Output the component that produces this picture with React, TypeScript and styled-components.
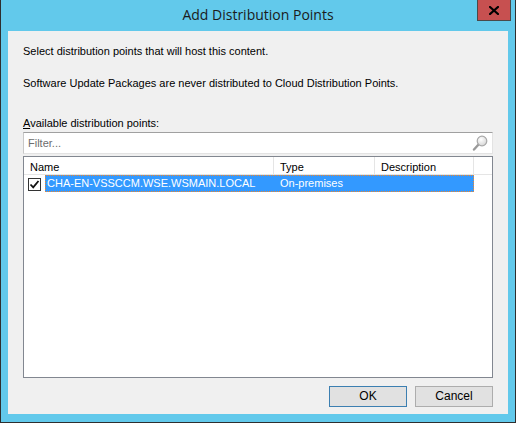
import React from 'react'
import styled, { createGlobalStyle } from 'styled-components'

const GlobalStyle = createGlobalStyle`
    html, body {
        margin: 0;
        padding: 0;
        background: #ffffff;
    }
    * {
        box-sizing: border-box;
    }
`

const FRAME = '#62c9eb'
const UI_FONT = '"Liberation Sans", Arial, sans-serif'

const Window = styled.div`
    width: 516px;
    height: 423px;
    background: ${FRAME};
    border: 1px solid #2e2e2e;
    border-top: none;
    display: flex;
    flex-direction: column;
    padding: 0 7px 8px 7px;
`

const TitleBar = styled.div`
    height: 31px;
    margin: 0 -7px;
    display: grid;
    grid-template-columns: 1fr auto 1fr;
    align-items: start;
`

const Title = styled.div`
    grid-column: 2;
    padding-top: 5px;
    font-family: "Open Sans", sans-serif;
    font-size: 14px;
    line-height: 20px;
    color: #1b1b1b;
`

const CloseButton = styled.div`
    grid-column: 3;
    justify-self: end;
    margin-right: 4px;
    width: 34px;
    height: 21px;
    background: #c75050;
    border: 1px solid #4a4a4a;
    border-top: none;
    display: flex;
    align-items: center;
    justify-content: center;
`

const Client = styled.div`
    flex: 1;
    background: #f0f0f0;
    padding: 14px 15px 7px 15px;
    display: flex;
    flex-direction: column;
    font-family: ${UI_FONT};
    font-size: 11px;
    line-height: 13px;
    color: #000;
`

const Text = styled.div<{ $gap?: number }>`
    margin-bottom: ${p => p.$gap ?? 0}px;
    white-space: nowrap;
`

const FilterBox = styled.div`
    height: 22px;
    width: 470px;
    background: #fff;
    border: 1px solid #e3e3e3;
    border-top-color: #a0a0a0;
    border-left-color: #c8c8c8;
    display: flex;
    align-items: center;
    padding: 0 4px 0 4px;
    margin-bottom: 1px;
`

const FilterText = styled.span`
    flex: 1;
    color: #6d6d6d;
`

const ListView = styled.div`
    width: 470px;
    height: 222px;
    margin-top: 1px;
    background: #fff;
    border: 1px solid #828790;
    display: flex;
    flex-direction: column;
`

const HeaderRow = styled.div`
    display: flex;
    height: 18px;
    border-bottom: 1px solid #e5e5e5;
`

const HeaderCell = styled.div<{ $w: number }>`
    width: ${p => p.$w}px;
    border-right: 1px solid #e5e5e5;
    padding: 4px 0 0 6px;
    line-height: 13px;
    white-space: nowrap;
`

const HeaderFill = styled.div`
    flex: 1;
`

const Row = styled.div`
    display: flex;
    height: 17px;
    align-items: stretch;
`

const CheckCell = styled.div`
    width: 21px;
    display: flex;
    align-items: center;
    padding-left: 4px;
`

const CheckBox = styled.div`
    width: 13px;
    height: 13px;
    border: 1px solid #333;
    background: #fff;
    display: flex;
    align-items: center;
    justify-content: center;
    margin-top: 2px;
`

const Selection = styled.div`
    display: flex;
    width: 429px;
    background: #3399ff;
    border: 1px dotted #f0862a;
    color: #fff;
    align-items: center;
`

const Cell = styled.div<{ $w: number; $pad: number }>`
    width: ${p => p.$w}px;
    padding-left: ${p => p.$pad}px;
    white-space: nowrap;
`

const Footer = styled.div`
    margin-top: auto;
    display: flex;
    justify-content: flex-end;
    gap: 8px;
`

const Button = styled.div<{ $default?: boolean }>`
    width: 78px;
    height: 21px;
    background: #e1e1e1;
    border: 1px solid ${p => (p.$default ? '#3c7fb1' : '#adadad')};
    display: flex;
    align-items: center;
    justify-content: center;
    font-size: 12px;
`

const Magnifier = () => (
    <svg width="16" height="16" viewBox="0 0 16 16">
        <defs>
            <radialGradient id="lens" cx="0.4" cy="0.35" r="0.7">
                <stop offset="0" stopColor="#ffffff" />
                <stop offset="1" stopColor="#d4d4d4" />
            </radialGradient>
        </defs>
        <line x1="7" y1="9" x2="2" y2="14.5" stroke="#9a9a9a" strokeWidth="2.4" strokeLinecap="round" />
        <circle cx="10" cy="6" r="4.8" fill="url(#lens)" stroke="#a8a8a8" strokeWidth="1.2" />
    </svg>
)

const CloseGlyph = () => (
    <svg width="10" height="9" viewBox="0 0 10 9">
        <path d="M1 1 L9 8 M9 1 L1 8" stroke="#000" strokeWidth="2.2" strokeLinecap="square" />
    </svg>
)

const Check = () => (
    <svg width="11" height="11" viewBox="0 0 11 11">
        <path d="M1.5 5.5 L4.2 8.3 L9.5 2" stroke="#111" strokeWidth="1.8" fill="none" />
    </svg>
)

const App = () => {
    return (
        <>
            <GlobalStyle />
            <Window>
                <TitleBar>
                    <Title>Add Distribution Points</Title>
                    <CloseButton>
                        <CloseGlyph />
                    </CloseButton>
                </TitleBar>
                <Client>
                    <Text $gap={19}>Select distribution points that will host this content.</Text>
                    <Text $gap={27}>Software Update Packages are never distributed to Cloud Distribution Points.</Text>
                    <Text $gap={2}>
                        <u>A</u>vailable distribution points:
                    </Text>
                    <FilterBox>
                        <FilterText>Filter...</FilterText>
                        <Magnifier />
                    </FilterBox>
                    <ListView>
                        <HeaderRow>
                            <HeaderCell $w={250}>Name</HeaderCell>
                            <HeaderCell $w={101}>Type</HeaderCell>
                            <HeaderCell $w={99}>Description</HeaderCell>
                            <HeaderFill />
                        </HeaderRow>
                        <Row>
                            <CheckCell>
                                <CheckBox>
                                    <Check />
                                </CheckBox>
                            </CheckCell>
                            <Selection>
                                <Cell $w={228} $pad={1}>CHA-EN-VSSCCM.WSE.WSMAIN.LOCAL</Cell>
                                <Cell $w={101} $pad={6}>On-premises</Cell>
                                <Cell $w={98} $pad={6}></Cell>
                            </Selection>
                        </Row>
                    </ListView>
                    <Footer>
                        <Button $default>OK</Button>
                        <Button>Cancel</Button>
                    </Footer>
                </Client>
            </Window>
        </>
    )
}

export default App
